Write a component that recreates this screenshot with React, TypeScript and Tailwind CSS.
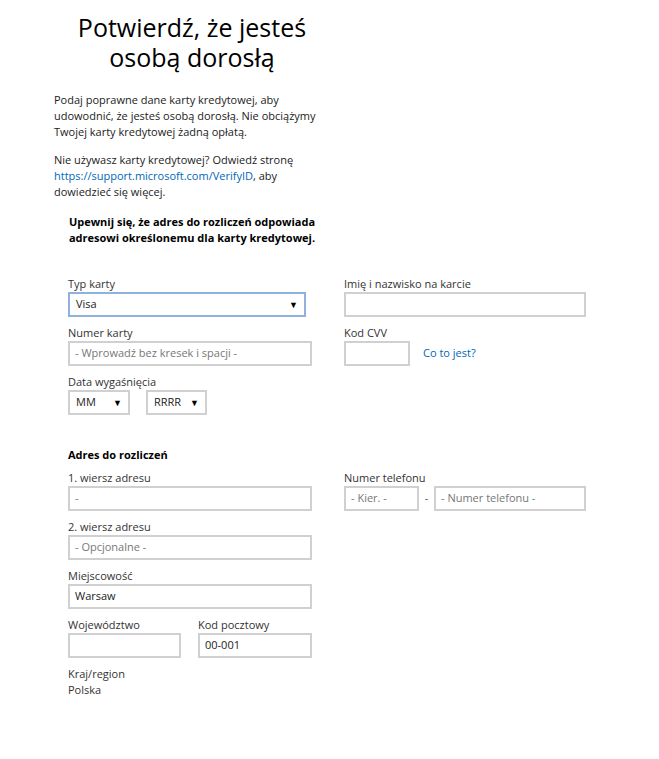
import React from 'react';

const font = { fontFamily: '"Open Sans", "Noto Sans", sans-serif' };

const Label: React.FC<{ children: React.ReactNode }> = ({ children }) => (
  <div className="h-4 text-[11px] leading-4 text-[#333]">{children}</div>
);

const Input: React.FC<{ w: string; value?: string; placeholder?: string }> = ({ w, value, placeholder }) => (
  <div className={`${w} flex h-[25px] items-center border-2 border-[#d0d0d0] bg-white px-[5px] text-[11px]`}>
    {value ? <span className="text-[#222]">{value}</span> : <span className="text-[#777]">{placeholder}</span>}
  </div>
);

const Select: React.FC<{ w: string; value: string; focused?: boolean }> = ({ w, value, focused }) => (
  <div
    className={`${w} flex h-[25px] items-center justify-between border-2 bg-white pl-[6px] pr-[6px] text-[11px] text-[#222] ${
      focused ? 'border-[#8fb1dd]' : 'border-[#d0d0d0]'
    }`}
  >
    <span>{value}</span>
    <span className="text-[9px] leading-none text-black">▼</span>
  </div>
);

const App: React.FC = () => {
  return (
    <div className="min-h-[759px] w-[659px] bg-white pl-[54px] text-[#222]" style={font}>
      <div className="w-[276px]">
        <h1 className="pt-[12px] text-center text-[25px] font-normal leading-[30px] text-black">
          Potwierdź, że jesteś osobą dorosłą
        </h1>
        <p className="mt-[20px] text-[11px] leading-4">
          Podaj poprawne dane karty kredytowej, aby udowodnić, że jesteś osobą dorosłą. Nie obciążymy Twojej karty
          kredytowej żadną opłatą.
        </p>
        <p className="mt-[12px] text-[11px] leading-4">
          Nie używasz karty kredytowej? Odwiedź stronę
          <br />
          <a className="text-[#0067b8]">https://support.microsoft.com/VerifyID</a>, aby
          <br />
          dowiedzieć się więcej.
        </p>
        <p className="mt-[14px] text-center text-[11px] font-bold leading-4 text-black">
          Upewnij się, że adres do rozliczeń odpowiada adresowi określonemu dla karty kredytowej.
        </p>
      </div>

      {/* Card details */}
      <div className="mt-[30px] ml-[14px] flex gap-8">
        <div className="flex w-[244px] flex-col gap-2">
          <div>
            <Label>Typ karty</Label>
            <Select w="w-[238px]" value="Visa" focused />
          </div>
          <div>
            <Label>Numer karty</Label>
            <Input w="w-[244px]" placeholder="- Wprowadź bez kresek i spacji -" />
          </div>
          <div>
            <Label>Data wygaśnięcia</Label>
            <div className="flex gap-4">
              <Select w="w-[62px]" value="MM" />
              <Select w="w-[61px]" value="RRRR" />
            </div>
          </div>
        </div>
        <div className="flex w-[242px] flex-col gap-2">
          <div>
            <Label>Imię i nazwisko na karcie</Label>
            <Input w="w-[242px]" />
          </div>
          <div>
            <Label>Kod CVV</Label>
            <div className="flex items-center gap-[13px]">
              <Input w="w-[66px]" />
              <span className="text-[11px] text-[#0067b8]">Co to jest?</span>
            </div>
          </div>
        </div>
      </div>

      {/* Billing address */}
      <div className="mt-[32px] ml-[14px]">
        <div className="h-4 text-[11px] font-bold leading-4 text-black">Adres do rozliczeń</div>
        <div className="mt-[7px] flex gap-8">
          <div className="flex w-[244px] flex-col gap-2">
            <div>
              <Label>1. wiersz adresu</Label>
              <Input w="w-[244px]" placeholder="-" />
            </div>
            <div>
              <Label>2. wiersz adresu</Label>
              <Input w="w-[244px]" placeholder="- Opcjonalne -" />
            </div>
            <div>
              <Label>Miejscowość</Label>
              <Input w="w-[244px]" value="Warsaw" />
            </div>
            <div className="flex gap-[17px]">
              <div>
                <Label>Województwo</Label>
                <Input w="w-[113px]" />
              </div>
              <div>
                <Label>Kod pocztowy</Label>
                <Input w="w-[114px]" value="00-001" />
              </div>
            </div>
            <div className="text-[11px] leading-4 text-[#333]">
              <div>Kraj/region</div>
              <div>Polska</div>
            </div>
          </div>
          <div className="w-[242px]">
            <Label>Numer telefonu</Label>
            <div className="flex items-center">
              <Input w="w-[75px]" placeholder="- Kier. -" />
              <span className="w-[15px] text-center text-[11px] text-[#555]">-</span>
              <Input w="w-[152px]" placeholder="- Numer telefonu -" />
            </div>
          </div>
        </div>
      </div>
    </div>
  );
};

export default App;
